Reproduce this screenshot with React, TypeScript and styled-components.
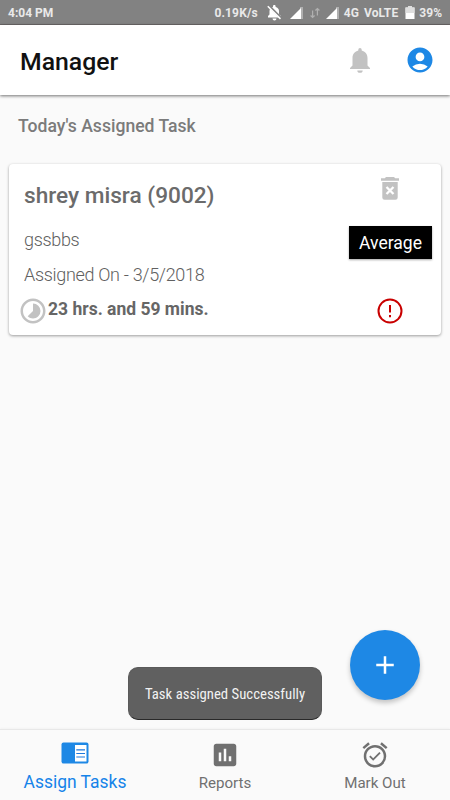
import React from "react";
import styled, { createGlobalStyle } from "styled-components";
import { MdAccountCircle, MdAdd, MdAlarmOn, MdAssessment, MdTimelapse } from "react-icons/md";

const GlobalStyle = createGlobalStyle`
  * { box-sizing: border-box; }
  body { margin: 0; font-family: Roboto, "Liberation Sans", sans-serif; }
  svg { display: block; flex: none; }
`;

const Screen = styled.div`
  position: relative;
  display: flex;
  flex-direction: column;
  width: 450px;
  height: 800px;
  overflow: hidden;
  background: #fafafa;
  white-space: nowrap;
`;

const StatusBar = styled.div`
  display: flex;
  align-items: center;
  height: 25px;
  padding: 2px 8px 0;
  background: #828282;
  border-bottom: 1px solid #6c6868;
  color: #e9e9e9;
  font-size: 12px;
  font-weight: 700;
`;

const StatusText = styled.span<{ $gap?: number; $tracking?: number }>`
  margin-left: ${(p) => p.$gap ?? 0}px;
  letter-spacing: ${(p) => p.$tracking ?? 0}px;
`;

const StatusGroup = styled.div`
  display: flex;
  align-items: center;
  margin-left: auto;
`;

const StatusIcon = styled.svg<{ $gap: number }>`
  margin-left: ${(p) => p.$gap}px;
  margin-bottom: 1px;
`;

const Header = styled.header`
  position: relative;
  display: flex;
  align-items: center;
  height: 70px;
  padding: 0 15px 0 20px;
  background: #fff;
  box-shadow: 0 1px 3px rgba(0, 0, 0, 0.55);
`;

const Title = styled.h1`
  flex: 1;
  margin: 2px 0 0;
  color: #111;
  font-size: 24.8px;
  font-weight: 500;
`;

const BellIcon = styled.svg`
  margin-right: 35px;
`;

const Main = styled.main`
  flex: 1;
  padding: 20px 9px 0;
`;

const SectionTitle = styled.h2`
  margin: 1px 0 27px 9px;
  color: #7b7b7b;
  font-size: 17.6px;
  font-weight: 500;
  line-height: 21px;
`;

const Card = styled.article`
  display: flex;
  justify-content: space-between;
  height: 171px;
  background: #fff;
  border-radius: 4px;
  box-shadow: 0 1px 3px rgba(0, 0, 0, 0.38);
`;

const Details = styled.div`
  display: flex;
  flex-direction: column;
  padding: 18px 0 0 15px;
`;

const Name = styled.h3`
  margin: 0 0 18px;
  color: #6b6b6b;
  font-size: 22.65px;
  font-weight: 500;
  line-height: 28px;
`;

const Detail = styled.p`
  margin: 0 0 11px;
  color: #606060;
  font-size: 18px;
  font-weight: 300;
  letter-spacing: -0.32px;
  line-height: 24px;
`;

const TimeLeft = styled.div`
  display: flex;
  align-items: center;
  margin: -2px 0 0 -6px;
  color: #c2c2c2;
`;

const TimeText = styled.strong`
  margin-top: -5px;
  color: #666;
  font-size: 17.5px;
  line-height: 24px;
`;

const CardActions = styled.div`
  display: flex;
  flex-direction: column;
  align-items: center;
  width: 83px;
  margin-right: 9.5px;
  padding-top: 13px;
`;

const Badge = styled.span`
  margin: 26px 0 37px 1px;
  width: 83px;
  height: 33px;
  background: #000;
  box-shadow: 0 1px 2px rgba(0, 0, 0, 0.35);
  color: #fff;
  font-size: 17.5px;
  line-height: 35px;
  text-align: center;
`;

const Toast = styled.div`
  position: absolute;
  top: 667px;
  left: 128px;
  display: flex;
  align-items: center;
  justify-content: center;
  width: 194px;
  height: 53px;
  border-radius: 10px;
  background: #606060;
  border: 1px solid #5a5a5a;
  border-bottom-color: #292929;
  color: #f2f2f2;
  font-family: "Roboto Condensed", Roboto, sans-serif;
  font-size: 14.75px;
  font-stretch: 75%;
`;

const Fab = styled.button`
  position: absolute;
  top: 630px;
  left: 350px;
  display: flex;
  align-items: center;
  justify-content: center;
  width: 70px;
  height: 70px;
  padding: 0;
  border: 0;
  border-radius: 50%;
  background: #1e88e5;
  box-shadow: 0 3px 5px rgba(0, 0, 0, 0.22);
  color: #fff;
`;

const TabBar = styled.nav`
  display: grid;
  grid-template-columns: repeat(3, 1fr);
  height: 71px;
  border-top: 1px solid #e8e8e8;
  box-shadow: 0 -1px 2px rgba(0, 0, 0, 0.03);
`;

const Tab = styled.a<{ $active?: boolean }>`
  display: flex;
  flex-direction: column;
  align-items: center;
  padding-top: ${(p) => (p.$active ? 8 : 10)}px;
  color: ${(p) => (p.$active ? "#1583e9" : "#707070")};
  font-size: ${(p) => (p.$active ? 17.45 : 15.1)}px;
  font-weight: 400;
  line-height: 20px;
`;

const TabLabel = styled.span<{ $active?: boolean }>`
  margin-top: ${(p) => (p.$active ? 4 : 2.5)}px;
`;

const Signal = ({ gap }: { gap: number }) => (
  <StatusIcon $gap={gap} width="13" height="13" viewBox="0 0 13 13">
    <path d="M10 1h3v12h-3z" fill="#b0b0b0" />
    <path d="M0 13 11 2V13z" fill="#fff" />
  </StatusIcon>
);

export default function App() {
  return (
    <Screen>
      <GlobalStyle />
      <StatusBar>
        <StatusText>4:04 PM</StatusText>
        <StatusGroup>
          <StatusText $tracking={0.15}>0.19K/s</StatusText>
          <StatusIcon $gap={9} width="15" height="16" viewBox="0 0 15 16">
            <path d="M1 12.5V11l1.500-1.500V6C2.500 3.800 4.200 2.400 6 2V1.200a1.300 1.300 0 0 1 2.600 0V2c2 .5 3.400 2 3.400 4v3.500L14 11v1.500zM5.500 13.500h4a2 2 0 0 1-4 0z" fill="#fff" />
            <path d="m1 0 14 14" stroke="#828282" strokeWidth="2.600" />
            <path d="m.8 1.200 12.700 12.700" stroke="#fff" strokeWidth="1.500" />
          </StatusIcon>
          <Signal gap={8} />
          <StatusIcon $gap={7} width="10" height="12" viewBox="0 0 10 12" fill="none" stroke="#b0b0b0" strokeWidth="1.200">
            <path d="M2.600 3.500v7M.6 8.500l2 2 2-2M7.400 8.500v-7M5.400 3.500l2-2 2 2" />
          </StatusIcon>
          <Signal gap={6} />
          <StatusText $gap={5}>4G</StatusText>
          <StatusText $gap={5} $tracking={0.15}>VoLTE</StatusText>
          <StatusIcon $gap={7} width="10" height="13" viewBox="0 0 10 13">
            <path d="M3 0h4v1.500h2.500V13H.5V1.500H3z" fill="#fff" />
            <path d="M3 0h4v1.500h2.500V7H.5V1.500H3z" fill="#dedede" />
          </StatusIcon>
          <StatusText $gap={4}>39%</StatusText>
        </StatusGroup>
      </StatusBar>
      <Header>
        <Title>Manager</Title>
        <BellIcon width="20" height="25" viewBox="0 0 20 25" fill="#c2c2c2">
          <path d="M0 21v-1l2.500-2.500V10C2.500 6 5 3.300 8.300 2.500V1.700a1.700 1.700 0 0 1 3.400 0v.8C15 3.300 17.500 6 17.500 10v7.500L20 20v1zM7.300 22.500h5.400a2.700 2.300 0 0 1-5.400 0z" />
        </BellIcon>
        <MdAccountCircle size={30} color="#1e88e5" />
      </Header>
      <Main>
        <SectionTitle>Today's Assigned Task</SectionTitle>
        <Card>
          <Details>
            <Name>shrey misra (9002)</Name>
            <Detail>gssbbs</Detail>
            <Detail>Assigned On - 3/5/2018</Detail>
            <TimeLeft>
              <MdTimelapse size={30} />
              <TimeText>23 hrs. and 59 mins.</TimeText>
            </TimeLeft>
          </Details>
          <CardActions>
            <svg width="18" height="23" viewBox="0 0 18 23">
              <path d="M5 0h8l1.200 1.300H18v2.500H0V1.300h3.800zM1.300 5h15.400v15.500a2.300 2.300 0 0 1-2.300 2.300H3.600a2.300 2.300 0 0 1-2.300-2.300z" fill="#c2c2c2" />
              <path d="m5.500 10 7 7m0-7-7 7" stroke="#fff" strokeWidth="2.300" />
            </svg>
            <Badge>Average</Badge>
            <svg width="30" height="30" viewBox="0 0 30 30" fill="none" stroke="#c90000" strokeWidth="2">
              <circle cx="15" cy="15" r="11.500" />
              <path d="M15 9v7.500M15 19v2.200" />
            </svg>
          </CardActions>
        </Card>
      </Main>
      <TabBar>
        <Tab $active>
          <svg width="30" height="30" viewBox="0 0 30 30">
            <rect x="1.500" y="4.500" width="27" height="21" rx="2" fill="#1e88e5" />
            <path d="M15 7h11.500v16.500H15z" fill="#fff" />
            <path d="M16.300 11.800H25M16.300 15.500H25M16.300 19H25" stroke="#1e78dc" strokeWidth="1.200" />
          </svg>
          <TabLabel $active>Assign Tasks</TabLabel>
        </Tab>
        <Tab>
          <MdAssessment size={30} />
          <TabLabel>Reports</TabLabel>
        </Tab>
        <Tab>
          <MdAlarmOn size={30} />
          <TabLabel>Mark Out</TabLabel>
        </Tab>
      </TabBar>
      <Toast>Task assigned Successfully</Toast>
      <Fab aria-label="Assign a task">
        <MdAdd size={30} />
      </Fab>
    </Screen>
  );
}
